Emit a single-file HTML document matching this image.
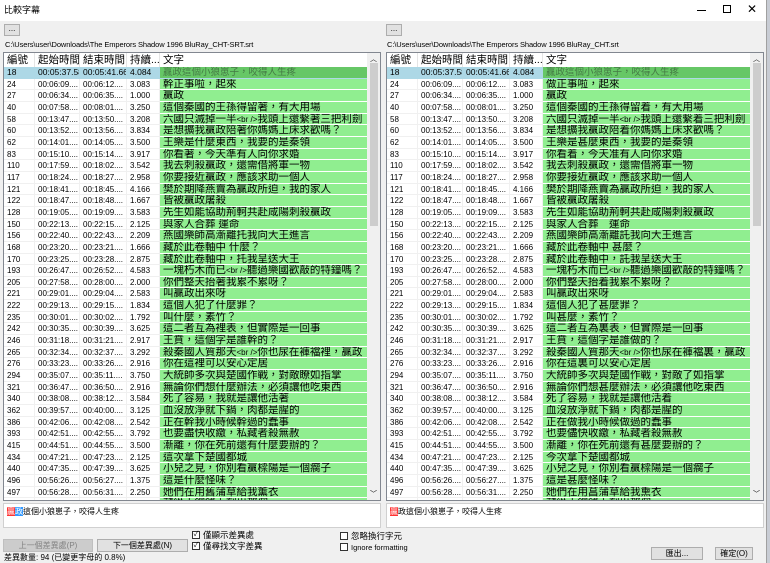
<!DOCTYPE html>
<html><head><meta charset="utf-8">
<style>
*{box-sizing:border-box;margin:0;padding:0}
body{width:770px;height:563px;background:#f0f0f0;position:relative;overflow:hidden;font-family:"Liberation Sans","Noto Sans CJK TC",sans-serif;color:#000}
.abs{position:absolute}
.title{left:0;top:0;width:766px;height:21px;background:#fff;font-size:9px;line-height:21px;padding-left:4px}
.dots{width:16px;height:12px;border:1px solid #adadad;background:#e1e1e1;font-size:8px;line-height:8px;text-align:center}
.path{font-size:7.5px;white-space:nowrap;letter-spacing:-0.1px}
.tbl{top:52px;height:449px;width:378px;background:#fff;border:1px solid #828790;overflow:hidden}
.hdr{height:14px;display:flex;font-size:10.5px;line-height:14px;background:#fff}
.hdr div{border-right:1px solid #e5e5e5;padding-left:3px;white-space:nowrap;overflow:hidden}
.row{height:11.67px;display:flex;font-size:8px;line-height:11px}
.row div{border-right:1px solid #f0f0f0;border-bottom:1px solid #f0f0f0;padding-left:3px;white-space:nowrap;overflow:hidden}
.row .t{background:#90ee90;font-size:10.5px;line-height:11px;border-bottom:1px solid #fff;border-right:none}
.row.sel div{background:#add8e6;font-size:8.5px;border-color:#add8e6}
.row.sel .t{background:#66c766;color:#447a44;font-size:9.5px}
.c1{width:31px}.c2{width:45px}.c3{width:47px}.c4{width:33px}.t{width:207px}
.sb{position:absolute;right:0;top:0;width:13px;height:447px;background:#f0f0f0}
.thumb{position:absolute;left:3px;top:10px;width:8px;height:163px;background:#cdcdcd}
.tbox{top:503px;height:25px;width:378px;background:#fff;border:1px solid #d0d0d0;font-size:8px;line-height:12px;padding:2px 3px}
.btn{height:13px;border:1px solid #adadad;background:#e1e1e1;font-size:8px;line-height:11px;text-align:center}
.cb{width:8px;height:8px;border:1px solid #333;background:#fff;font-size:7px;line-height:6px;text-align:center}
.lbl{font-size:8.5px;line-height:9px;white-space:nowrap}
</style></head><body>
<div class="abs title">比較字幕</div>
<div class="abs" style="left:697px;top:10px;width:9px;height:1px;background:#000"></div>
<div class="abs" style="left:723px;top:5px;width:8px;height:8px;border:1px solid #000"></div>
<div class="abs" style="left:747px;top:0;font-size:12px;line-height:19px">✕</div>
<div class="abs" style="left:766px;top:0;width:4px;height:563px;background:#c8ccd4;border-left:1px solid #a0a0a0"></div>

<div class="abs dots" style="left:4px;top:24px">...</div>
<div class="abs dots" style="left:386px;top:24px">...</div>
<div class="abs path" style="left:5px;top:40px">C:\Users\user\Downloads\The Emperors Shadow 1996 BluRay_CHT-SRT.srt</div>
<div class="abs path" style="left:387px;top:40px">C:\Users\user\Downloads\The Emperors Shadow 1996 BluRay_CHT.srt</div>

<div class="abs tbl" style="left:3px">
<div class="hdr"><div class="c1">編號</div><div class="c2">起始時間</div><div class="c3">結束時間</div><div class="c4">持續...</div><div class="t" style="border:none">文字</div></div>
<div class="row sel"><div class="c1">18</div><div class="c2">00:05:37.58</div><div class="c3">00:05:41.66</div><div class="c4">4.084</div><div class="t">贏政這個小狼崽子，咬得人生疼</div></div>
<div class="row"><div class="c1">24</div><div class="c2">00:06:09....</div><div class="c3">00:06:12....</div><div class="c4">3.083</div><div class="t">幹正事啦，起來</div></div>
<div class="row"><div class="c1">27</div><div class="c2">00:06:34....</div><div class="c3">00:06:35....</div><div class="c4">1.000</div><div class="t">贏政</div></div>
<div class="row"><div class="c1">40</div><div class="c2">00:07:58....</div><div class="c3">00:08:01....</div><div class="c4">3.250</div><div class="t">這個秦國的王孫得留著，有大用場</div></div>
<div class="row"><div class="c1">58</div><div class="c2">00:13:47....</div><div class="c3">00:13:50....</div><div class="c4">3.208</div><div class="t">六國只滅掉一半<span style="font-size:8px">&lt;br /&gt;</span>我頭上還繫著三把利劍</div></div>
<div class="row"><div class="c1">60</div><div class="c2">00:13:52....</div><div class="c3">00:13:56....</div><div class="c4">3.834</div><div class="t">是想擴我贏政陪著你媽媽上床求歡嗎？</div></div>
<div class="row"><div class="c1">62</div><div class="c2">00:14:01....</div><div class="c3">00:14:05....</div><div class="c4">3.500</div><div class="t">王樂是什麼東西，我要的是秦領</div></div>
<div class="row"><div class="c1">83</div><div class="c2">00:15:10....</div><div class="c3">00:15:14....</div><div class="c4">3.917</div><div class="t">你看著，今天準有人向你求婚</div></div>
<div class="row"><div class="c1">110</div><div class="c2">00:17:59....</div><div class="c3">00:18:02....</div><div class="c4">3.542</div><div class="t">我去刺殺贏政，還需借將軍一物</div></div>
<div class="row"><div class="c1">117</div><div class="c2">00:18:24....</div><div class="c3">00:18:27....</div><div class="c4">2.958</div><div class="t">你要接近贏政，應該求助一個人</div></div>
<div class="row"><div class="c1">121</div><div class="c2">00:18:41....</div><div class="c3">00:18:45....</div><div class="c4">4.166</div><div class="t">樊於期降燕賣為贏政所迫，我的家人</div></div>
<div class="row"><div class="c1">122</div><div class="c2">00:18:47....</div><div class="c3">00:18:48....</div><div class="c4">1.667</div><div class="t">皆被贏政屠殺</div></div>
<div class="row"><div class="c1">128</div><div class="c2">00:19:05....</div><div class="c3">00:19:09....</div><div class="c4">3.583</div><div class="t">先生如能協助荊軻共赴咸陽刺殺贏政</div></div>
<div class="row"><div class="c1">150</div><div class="c2">00:22:13....</div><div class="c3">00:22:15....</div><div class="c4">2.125</div><div class="t">與家人合葬 運命</div></div>
<div class="row"><div class="c1">156</div><div class="c2">00:22:40....</div><div class="c3">00:22:43....</div><div class="c4">2.209</div><div class="t">燕國樂師高漸離托我向大王進言</div></div>
<div class="row"><div class="c1">168</div><div class="c2">00:23:20....</div><div class="c3">00:23:21....</div><div class="c4">1.666</div><div class="t">藏於此卷軸中 什麼？</div></div>
<div class="row"><div class="c1">170</div><div class="c2">00:23:25....</div><div class="c3">00:23:28....</div><div class="c4">2.875</div><div class="t">藏於此卷軸中，托我呈送大王</div></div>
<div class="row"><div class="c1">193</div><div class="c2">00:26:47....</div><div class="c3">00:26:52....</div><div class="c4">4.583</div><div class="t">一塊朽木而已<span style="font-size:8px">&lt;br /&gt;</span>聽過樂國歡敲的特鐘嗎？</div></div>
<div class="row"><div class="c1">205</div><div class="c2">00:27:58....</div><div class="c3">00:28:00....</div><div class="c4">2.000</div><div class="t">你們整天抬著我累不累呀？</div></div>
<div class="row"><div class="c1">221</div><div class="c2">00:29:01....</div><div class="c3">00:29:04....</div><div class="c4">2.583</div><div class="t">叫贏政出來呀</div></div>
<div class="row"><div class="c1">222</div><div class="c2">00:29:13....</div><div class="c3">00:29:15....</div><div class="c4">1.834</div><div class="t">這個人犯了什麼罪？</div></div>
<div class="row"><div class="c1">235</div><div class="c2">00:30:01....</div><div class="c3">00:30:02....</div><div class="c4">1.792</div><div class="t">叫什麼，素竹？</div></div>
<div class="row"><div class="c1">242</div><div class="c2">00:30:35....</div><div class="c3">00:30:39....</div><div class="c4">3.625</div><div class="t">這二者互為裡表，但實際是一回事</div></div>
<div class="row"><div class="c1">246</div><div class="c2">00:31:18....</div><div class="c3">00:31:21....</div><div class="c4">2.917</div><div class="t">王賁，這個字是誰幹的？</div></div>
<div class="row"><div class="c1">265</div><div class="c2">00:32:34....</div><div class="c3">00:32:37....</div><div class="c4">3.292</div><div class="t">殺秦國人質那天<span style="font-size:8px">&lt;br /&gt;</span>你也尿在褲襠裡，贏政</div></div>
<div class="row"><div class="c1">276</div><div class="c2">00:33:23....</div><div class="c3">00:33:26....</div><div class="c4">2.916</div><div class="t">你在這裡可以安心定居</div></div>
<div class="row"><div class="c1">294</div><div class="c2">00:35:07....</div><div class="c3">00:35:11....</div><div class="c4">3.750</div><div class="t">大統帥多次與楚國作戰，對敵瞭如指掌</div></div>
<div class="row"><div class="c1">321</div><div class="c2">00:36:47....</div><div class="c3">00:36:50....</div><div class="c4">2.916</div><div class="t">無論你們想什麼辦法，必須讓他吃東西</div></div>
<div class="row"><div class="c1">340</div><div class="c2">00:38:08....</div><div class="c3">00:38:12....</div><div class="c4">3.584</div><div class="t">死了容易，我就是讓他活著</div></div>
<div class="row"><div class="c1">362</div><div class="c2">00:39:57....</div><div class="c3">00:40:00....</div><div class="c4">3.125</div><div class="t">血沒放淨就下鍋，肉都是腥的</div></div>
<div class="row"><div class="c1">386</div><div class="c2">00:42:06....</div><div class="c3">00:42:08....</div><div class="c4">2.542</div><div class="t">正在幹我小時候幹過的蠢事</div></div>
<div class="row"><div class="c1">393</div><div class="c2">00:42:51....</div><div class="c3">00:42:55....</div><div class="c4">3.792</div><div class="t">也要盡快收繳，私藏者殺無赦</div></div>
<div class="row"><div class="c1">415</div><div class="c2">00:44:51....</div><div class="c3">00:44:55....</div><div class="c4">3.500</div><div class="t">漸離，你在死前還有什麼要辦的？</div></div>
<div class="row"><div class="c1">434</div><div class="c2">00:47:21....</div><div class="c3">00:47:23....</div><div class="c4">2.125</div><div class="t">這次拿下楚國都城</div></div>
<div class="row"><div class="c1">440</div><div class="c2">00:47:35....</div><div class="c3">00:47:39....</div><div class="c4">3.625</div><div class="t">小兒之見，你別看贏樑陽是一個瘸子</div></div>
<div class="row"><div class="c1">496</div><div class="c2">00:56:26....</div><div class="c3">00:56:27....</div><div class="c4">1.375</div><div class="t">這是什麼怪味？</div></div>
<div class="row"><div class="c1">497</div><div class="c2">00:56:28....</div><div class="c3">00:56:31....</div><div class="c4">2.250</div><div class="t">她們在用舊蒲草給我薰衣</div></div>
<div class="row"><div class="c1"></div><div class="c2"></div><div class="c3"></div><div class="c4"></div><div class="t">藏從小銅錢上刻出那個</div></div>
<div class="sb"><div class="thumb"></div><div style="position:absolute;left:3px;top:1px;font-size:7px">︿</div><div style="position:absolute;left:3px;bottom:1px;font-size:7px">﹀</div></div>
</div>

<div class="abs tbl" style="left:386px">
<div class="hdr"><div class="c1">編號</div><div class="c2">起始時間</div><div class="c3">結束時間</div><div class="c4">持續...</div><div class="t" style="border:none">文字</div></div>
<div class="row sel"><div class="c1">18</div><div class="c2">00:05:37.58</div><div class="c3">00:05:41.66</div><div class="c4">4.084</div><div class="t">贏政這個小狼崽子，咬得人生疼</div></div>
<div class="row"><div class="c1">24</div><div class="c2">00:06:09....</div><div class="c3">00:06:12....</div><div class="c4">3.083</div><div class="t">做正事啦，起來</div></div>
<div class="row"><div class="c1">27</div><div class="c2">00:06:34....</div><div class="c3">00:06:35....</div><div class="c4">1.000</div><div class="t">贏政</div></div>
<div class="row"><div class="c1">40</div><div class="c2">00:07:58....</div><div class="c3">00:08:01....</div><div class="c4">3.250</div><div class="t">這個秦國的王孫得留着，有大用場</div></div>
<div class="row"><div class="c1">58</div><div class="c2">00:13:47....</div><div class="c3">00:13:50....</div><div class="c4">3.208</div><div class="t">六國只滅掉一半<span style="font-size:8px">&lt;br /&gt;</span>我頭上還繫着三把利劍</div></div>
<div class="row"><div class="c1">60</div><div class="c2">00:13:52....</div><div class="c3">00:13:56....</div><div class="c4">3.834</div><div class="t">是想擴我贏政陪着你媽媽上床求歡嗎？</div></div>
<div class="row"><div class="c1">62</div><div class="c2">00:14:01....</div><div class="c3">00:14:05....</div><div class="c4">3.500</div><div class="t">王樂是甚麼東西，我要的是秦領</div></div>
<div class="row"><div class="c1">83</div><div class="c2">00:15:10....</div><div class="c3">00:15:14....</div><div class="c4">3.917</div><div class="t">你看着，今天准有人向你求婚</div></div>
<div class="row"><div class="c1">110</div><div class="c2">00:17:59....</div><div class="c3">00:18:02....</div><div class="c4">3.542</div><div class="t">我去刺殺贏政，還需借將軍一物</div></div>
<div class="row"><div class="c1">117</div><div class="c2">00:18:24....</div><div class="c3">00:18:27....</div><div class="c4">2.958</div><div class="t">你要接近贏政，應該求助一個人</div></div>
<div class="row"><div class="c1">121</div><div class="c2">00:18:41....</div><div class="c3">00:18:45....</div><div class="c4">4.166</div><div class="t">樊於期降燕賣為贏政所迫，我的家人</div></div>
<div class="row"><div class="c1">122</div><div class="c2">00:18:47....</div><div class="c3">00:18:48....</div><div class="c4">1.667</div><div class="t">皆被贏政屠殺</div></div>
<div class="row"><div class="c1">128</div><div class="c2">00:19:05....</div><div class="c3">00:19:09....</div><div class="c4">3.583</div><div class="t">先生如能協助荊軻共赴咸陽刺殺贏政</div></div>
<div class="row"><div class="c1">150</div><div class="c2">00:22:13....</div><div class="c3">00:22:15....</div><div class="c4">2.125</div><div class="t">與家人合葬　運命</div></div>
<div class="row"><div class="c1">156</div><div class="c2">00:22:40....</div><div class="c3">00:22:43....</div><div class="c4">2.209</div><div class="t">燕國樂師高漸離託我向大王進言</div></div>
<div class="row"><div class="c1">168</div><div class="c2">00:23:20....</div><div class="c3">00:23:21....</div><div class="c4">1.666</div><div class="t">藏於此卷軸中 甚麼？</div></div>
<div class="row"><div class="c1">170</div><div class="c2">00:23:25....</div><div class="c3">00:23:28....</div><div class="c4">2.875</div><div class="t">藏於此卷軸中，託我呈送大王</div></div>
<div class="row"><div class="c1">193</div><div class="c2">00:26:47....</div><div class="c3">00:26:52....</div><div class="c4">4.583</div><div class="t">一塊朽木而已<span style="font-size:8px">&lt;br /&gt;</span>聽過樂國歡敲的特鐘嗎？</div></div>
<div class="row"><div class="c1">205</div><div class="c2">00:27:58....</div><div class="c3">00:28:00....</div><div class="c4">2.000</div><div class="t">你們整天抬着我累不累呀？</div></div>
<div class="row"><div class="c1">221</div><div class="c2">00:29:01....</div><div class="c3">00:29:04....</div><div class="c4">2.583</div><div class="t">叫贏政出來呀</div></div>
<div class="row"><div class="c1">222</div><div class="c2">00:29:13....</div><div class="c3">00:29:15....</div><div class="c4">1.834</div><div class="t">這個人犯了甚麼罪？</div></div>
<div class="row"><div class="c1">235</div><div class="c2">00:30:01....</div><div class="c3">00:30:02....</div><div class="c4">1.792</div><div class="t">叫甚麼，素竹？</div></div>
<div class="row"><div class="c1">242</div><div class="c2">00:30:35....</div><div class="c3">00:30:39....</div><div class="c4">3.625</div><div class="t">這二者互為裏表，但實際是一回事</div></div>
<div class="row"><div class="c1">246</div><div class="c2">00:31:18....</div><div class="c3">00:31:21....</div><div class="c4">2.917</div><div class="t">王賁，這個字是誰做的？</div></div>
<div class="row"><div class="c1">265</div><div class="c2">00:32:34....</div><div class="c3">00:32:37....</div><div class="c4">3.292</div><div class="t">殺秦國人質那天<span style="font-size:8px">&lt;br /&gt;</span>你也尿在褲襠裏，贏政</div></div>
<div class="row"><div class="c1">276</div><div class="c2">00:33:23....</div><div class="c3">00:33:26....</div><div class="c4">2.916</div><div class="t">你在這裏可以安心定居</div></div>
<div class="row"><div class="c1">294</div><div class="c2">00:35:07....</div><div class="c3">00:35:11....</div><div class="c4">3.750</div><div class="t">大統帥多次與楚國作戰，對敵了如指掌</div></div>
<div class="row"><div class="c1">321</div><div class="c2">00:36:47....</div><div class="c3">00:36:50....</div><div class="c4">2.916</div><div class="t">無論你們想甚麼辦法，必須讓他吃東西</div></div>
<div class="row"><div class="c1">340</div><div class="c2">00:38:08....</div><div class="c3">00:38:12....</div><div class="c4">3.584</div><div class="t">死了容易，我就是讓他活着</div></div>
<div class="row"><div class="c1">362</div><div class="c2">00:39:57....</div><div class="c3">00:40:00....</div><div class="c4">3.125</div><div class="t">血沒放淨就下鍋，肉都是腥的</div></div>
<div class="row"><div class="c1">386</div><div class="c2">00:42:06....</div><div class="c3">00:42:08....</div><div class="c4">2.542</div><div class="t">正在做我小時候做過的蠢事</div></div>
<div class="row"><div class="c1">393</div><div class="c2">00:42:51....</div><div class="c3">00:42:55....</div><div class="c4">3.792</div><div class="t">也要儘快收繳，私藏者殺無赦</div></div>
<div class="row"><div class="c1">415</div><div class="c2">00:44:51....</div><div class="c3">00:44:55....</div><div class="c4">3.500</div><div class="t">漸離，你在死前還有甚麼要辦的？</div></div>
<div class="row"><div class="c1">434</div><div class="c2">00:47:21....</div><div class="c3">00:47:23....</div><div class="c4">2.125</div><div class="t">今次拿下楚國都城</div></div>
<div class="row"><div class="c1">440</div><div class="c2">00:47:35....</div><div class="c3">00:47:39....</div><div class="c4">3.625</div><div class="t">小兒之見，你別看贏樑陽是一個瘸子</div></div>
<div class="row"><div class="c1">496</div><div class="c2">00:56:26....</div><div class="c3">00:56:27....</div><div class="c4">1.375</div><div class="t">這是甚麼怪味？</div></div>
<div class="row"><div class="c1">497</div><div class="c2">00:56:28....</div><div class="c3">00:56:31....</div><div class="c4">2.250</div><div class="t">她們在用菖蒲草給我熏衣</div></div>
<div class="row"><div class="c1"></div><div class="c2"></div><div class="c3"></div><div class="c4"></div><div class="t">藏從小銅錢上刻出那個</div></div>
<div class="sb"><div class="thumb"></div><div style="position:absolute;left:3px;top:1px;font-size:7px">︿</div><div style="position:absolute;left:3px;bottom:1px;font-size:7px">﹀</div></div>
</div>

<div class="abs tbox" style="left:3px"><span style="background:#f33;color:#fff">贏</span><span style="background:#39f;color:#fff">政</span>這個小狼崽子，咬得人生疼</div>
<div class="abs tbox" style="left:386px"><span style="background:#f33;color:#fff">贏</span>政這個小狼崽子，咬得人生疼</div>

<div class="abs btn" style="left:3px;top:539px;width:90px;background:#cccccc;border-color:#bfbfbf;color:#838383">上一個差異處(P)</div>
<div class="abs btn" style="left:97px;top:539px;width:91px">下一個差異處(N)</div>
<div class="abs cb" style="left:192px;top:531px">✓</div>
<div class="abs lbl" style="left:203px;top:531px">僅顯示差異處</div>
<div class="abs cb" style="left:192px;top:542px">✓</div>
<div class="abs lbl" style="left:203px;top:542px">僅尋找文字差異</div>
<div class="abs cb" style="left:340px;top:532px"></div>
<div class="abs lbl" style="left:351px;top:532px">忽略換行字元</div>
<div class="abs cb" style="left:340px;top:543px"></div>
<div class="abs lbl" style="left:351px;top:543px;font-size:7.5px">Ignore formatting</div>
<div class="abs btn" style="left:651px;top:547px;width:52px">匯出...</div>
<div class="abs btn" style="left:715px;top:547px;width:38px">確定(O)</div>
<div class="abs lbl" style="left:4px;top:553px;font-size:8px">差異數量: 94 (已變更字母的 0.8%)</div>
</body></html>
